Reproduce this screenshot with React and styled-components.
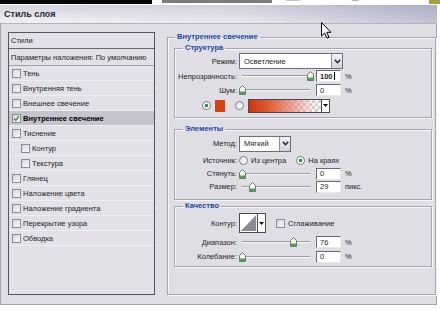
import React from 'react';
import styled, { createGlobalStyle } from 'styled-components';

const Global = createGlobalStyle`
  html, body { margin: 0; padding: 0; background: #fff; }
  body { font-family: "Liberation Sans", Arial, sans-serif; }
  #root { width: 440px; height: 310px; overflow: hidden; }
`;

const Screen = styled.div`
  position: relative;
  width: 440px;
  height: 310px;
  overflow: hidden;
  background: #fff;
  display: flex;
  flex-direction: column;
  font-family: "Liberation Sans", Arial, sans-serif;
  font-size: 7.5px;
  color: #1e1e24;
`;

const TopStrip = styled.div`
  display: flex;
  align-items: flex-start;
  height: 5px;
  flex: none;
`;

const StripSeg = styled.div`
  flex: none;
  width: ${(p) => p.$w}px;
  height: ${(p) => p.$h}px;
  margin-left: ${(p) => p.$ml || 0}px;
  background: ${(p) => p.$c};
`;

const Dialog = styled.div`
  width: 437px;
  height: 300px;
  flex: none;
  display: flex;
  flex-direction: column;
`;

const TitleBar = styled.div`
  height: 18px;
  flex: none;
  display: flex;
  align-items: center;
  padding-left: 4px;
  font-size: 9px;
  font-weight: bold;
  color: #2a2a30;
  background:
    linear-gradient(to bottom, rgba(170, 170, 195, 0.35), rgba(255, 255, 255, 0.25)),
    linear-gradient(to right, #ececf1 0%, #e2e2ea 55%, #aeb0c6 100%);
`;

const Body = styled.div`
  flex: 1;
  display: flex;
  align-items: flex-start;
  box-sizing: border-box;
  padding: 8px 0 0 7px;
  background: #dedee4;
  border: 1px solid #a4a4ae;
  border-top-color: #b4b4bc;
`;

const StyleList = styled.div`
  width: 147px;
  height: 263px;
  flex: none;
  box-sizing: border-box;
  border: 1px solid #55555e;
  background: #e1e1e7;
  display: flex;
  flex-direction: column;
`;

const ListHeader = styled.div`
  height: ${(p) => p.$h}px;
  flex: none;
  display: flex;
  align-items: center;
  padding-left: 2px;
  border-bottom: 1px solid ${(p) => p.$line};
`;

const ListRow = styled.div`
  height: 14px;
  flex: none;
  display: flex;
  align-items: center;
  gap: 2px;
  padding-left: ${(p) => (p.$indent ? 12 : 3)}px;
  border-bottom: 1px solid #eeeef2;
  background: ${(p) => (p.$selected ? '#c4c4cd' : 'transparent')};
  font-weight: ${(p) => (p.$selected ? 'bold' : 'normal')};
  color: ${(p) => (p.$selected ? '#000' : '#25252b')};
  white-space: nowrap;
`;

const CheckBox = styled.span`
  width: 7px;
  height: 7px;
  flex: none;
  display: inline-flex;
  align-items: center;
  justify-content: center;
  border: 1px solid #8a8a98;
  background: linear-gradient(135deg, #d4d4dc, #fafafc);
`;

const Group = styled.fieldset`
  margin: 0 0 0 12px;
  padding: 0 3px 0 6px;
  width: 269px;
  height: 263px;
  box-sizing: border-box;
  min-width: 0;
  border: 1px solid #a6a6b0;
  box-shadow: 1px 1px 0 #f6f6f8, inset 1px 1px 0 #f6f6f8;
  display: flex;
  flex-direction: column;
`;

const Legend = styled.legend`
  margin-left: ${(p) => p.$ml}px;
  padding: 0 2px;
  line-height: 10px;
  font-size: 7.5px;
  font-weight: bold;
  color: #1846a8;
`;

const SubGroup = styled.fieldset`
  margin: ${(p) => p.$mt}px 0 0 0;
  padding: 0 0 ${(p) => p.$pb}px 0;
  width: 258px;
  box-sizing: border-box;
  min-width: 0;
  border: 1px solid #a6a6b0;
  box-shadow: 1px 1px 0 #f6f6f8, inset 1px 1px 0 #f6f6f8;
`;

const Row = styled.div`
  height: ${(p) => p.$h}px;
  display: flex;
  align-items: center;
  padding-left: ${(p) => p.$pl || 0}px;
`;

const Label = styled.span`
  width: 62px;
  flex: none;
  text-align: right;
  margin-right: 2px;
  white-space: nowrap;
`;

const Select = styled.div`
  width: ${(p) => p.$w}px;
  height: 16px;
  box-sizing: border-box;
  flex: none;
  display: flex;
  align-items: center;
  background: #fff;
  border: 1px solid #6e6e78;
`;

const SelectText = styled.span`
  flex: 1;
  padding-left: 4px;
  white-space: nowrap;
`;

const DropButton = styled.span`
  width: 11px;
  height: 100%;
  flex: none;
  display: flex;
  align-items: center;
  justify-content: center;
  box-sizing: border-box;
  border-left: 1px solid #8e8e9c;
  background: linear-gradient(to bottom, #f2f2f6, #d2d2dc);
`;

const SliderBox = styled.div`
  position: relative;
  width: 74px;
  height: 10px;
  flex: none;
  margin-left: 0;
`;

const Track = styled.div`
  position: absolute;
  left: 3px;
  right: 3px;
  top: 4px;
  height: 0;
  border-top: 1px solid #9c9ca6;
  border-bottom: 1px solid #fafafc;
`;

const Thumb = styled.svg`
  position: absolute;
  top: 0;
  width: 7px;
  height: 10px;
`;

const NumInput = styled.div`
  width: 25px;
  height: 12px;
  flex: none;
  box-sizing: border-box;
  margin-left: 3px;
  padding-left: 3px;
  display: flex;
  align-items: center;
  background: #fff;
  border: 1px solid;
  border-color: #6a6a74 #e6e6ec #e6e6ec #6a6a74;
  font-weight: ${(p) => (p.$strong ? 'bold' : 'normal')};
`;

const Caret = styled.span`
  width: 1px;
  height: 8px;
  margin-left: 1px;
  background: #000;
`;

const Unit = styled.span`
  margin-left: 4px;
  white-space: nowrap;
`;

const Radio = styled.span`
  width: 7px;
  height: 7px;
  flex: none;
  border-radius: 50%;
  border: 1px solid #7a7a88;
  background: ${(p) =>
    p.$on
      ? 'radial-gradient(circle, #2f9a3a 0 1.6px, #fff 2.2px)'
      : 'linear-gradient(135deg, #e4e4ea, #fff)'};
  margin-right: ${(p) => p.$mr || 0}px;
  margin-left: ${(p) => p.$ml || 0}px;
`;

const Swatch = styled.span`
  width: 10px;
  height: 12px;
  flex: none;
  background: #d8420e;
`;

const GradientBox = styled.div`
  width: 82px;
  height: 14px;
  flex: none;
  box-sizing: border-box;
  display: flex;
  border: 1px solid #4a4a52;
  margin-left: 4px;
  background: conic-gradient(#d4d4d4 25%, #fff 0 50%, #d4d4d4 0 75%, #fff 0) 0 0 / 6px 6px;
`;

const GradientFill = styled.span`
  flex: 1;
  background: linear-gradient(
    to right,
    #d0340c 0%,
    #dc5a30 25%,
    rgba(232, 120, 96, 0.75) 55%,
    rgba(240, 170, 160, 0.25) 85%,
    rgba(255, 255, 255, 0) 100%
  );
`;

const DropStrip = styled.span`
  width: 7px;
  flex: none;
  display: flex;
  align-items: center;
  justify-content: center;
  background: #fff;
  border-left: 1px solid #4a4a52;
`;

const OptionText = styled.span`
  margin-left: 3px;
  white-space: nowrap;
`;

const ContourBox = styled.div`
  width: 27px;
  height: 20px;
  flex: none;
  box-sizing: border-box;
  display: flex;
  border: 1px solid #4a4a52;
  background: #fff;
`;

const ContourPreview = styled.svg`
  flex: 1;
  height: 100%;
`;

const Cursor = styled.svg`
  position: absolute;
  left: 321px;
  top: 22px;
  width: 11px;
  height: 17px;
`;

const CheckMark = () => (
  <svg width="7" height="7" viewBox="0 0 7 7">
    <path d="M1 3.6 L2.8 5.4 L6 1.2" fill="none" stroke="#2a9a2a" strokeWidth="1.4" />
  </svg>
);

const Chevron = () => (
  <svg width="7" height="5" viewBox="0 0 7 5">
    <path d="M0.8 0.8 L3.5 3.8 L6.2 0.8" fill="none" stroke="#1e1e28" strokeWidth="1.4" />
  </svg>
);

const SmallArrow = () => (
  <svg width="5" height="3" viewBox="0 0 5 3">
    <path d="M0 0 H5 L2.5 3 Z" fill="#111" />
  </svg>
);

const Slider = ({ frac }) => (
  <SliderBox>
    <Track />
    <Thumb viewBox="0 0 7 10" style={{ left: `${3 + frac * 68 - 3.5}px` }}>
      <path d="M0.5 3.5 L3.5 0.5 L6.5 3.5 V9.5 H0.5 Z" fill="#f4f6ee" stroke="#6c7a6c" />
      <rect x="1" y="6.5" width="5" height="2.5" fill="#49a84a" />
    </Thumb>
  </SliderBox>
);

const SliderRow = ({ label, frac, value, unit, h, caret }) => (
  <Row $h={h}>
    <Label>{label}</Label>
    <Slider frac={frac} />
    <NumInput $strong={caret}>
      {value}
      {caret && <Caret />}
    </NumInput>
    <Unit>{unit}</Unit>
  </Row>
);

const layers = [
  { name: 'Тень' },
  { name: 'Внутренняя тень' },
  { name: 'Внешнее свечение' },
  { name: 'Внутреннее свечение', checked: true, selected: true },
  { name: 'Тиснение' },
  { name: 'Контур', indent: true },
  { name: 'Текстура', indent: true },
  { name: 'Глянец' },
  { name: 'Наложение цвета' },
  { name: 'Наложение градиента' },
  { name: 'Перекрытие узора' },
  { name: 'Обводка' },
];

export default function App() {
  return (
    <Screen>
      <Global />
      <TopStrip>
        <StripSeg $w={152} $h={4} $c="#060606" />
        <StripSeg $w={110} $h={3} $ml={10} $c="#7c7c7c" />
        <StripSeg $w={14} $h={1} $ml={14} $c="#c8c8c8" />
        <StripSeg $w={6} $h={1} $ml={52} $c="#b0b0b0" />
        <StripSeg $w={22} $h={4} $ml={71} $c="#a3a040" />
      </TopStrip>
      <Dialog>
        <TitleBar>Стиль слоя</TitleBar>
        <Body>
          <StyleList>
            <ListHeader $h={15} $line="#66666e">Стили</ListHeader>
            <ListHeader $h={16} $line="#a0a0a8">Параметры наложения: По умолчанию</ListHeader>
            {layers.map((l) => (
              <ListRow key={l.name} $indent={l.indent} $selected={l.selected}>
                <CheckBox>{l.checked && <CheckMark />}</CheckBox>
                {l.name}
              </ListRow>
            ))}
          </StyleList>

          <Group>
            <Legend $ml={1}>Внутреннее свечение</Legend>

            <SubGroup $mt={1} $pb={3}>
              <Legend $ml={8}>Структура</Legend>
              <Row $h={16}>
                <Label>Режим:</Label>
                <Select $w={104}>
                  <SelectText>Осветление</SelectText>
                  <DropButton>
                    <Chevron />
                  </DropButton>
                </Select>
              </Row>
              <SliderRow h={14} label="Непрозрачность:" frac={1} value="100" unit="%" caret />
              <SliderRow h={14} label="Шум:" frac={0} value="0" unit="%" />
              <Row $h={17} $pl={27}>
                <Radio $on $mr={4} />
                <Swatch />
                <Radio $ml={10} />
                <GradientBox>
                  <GradientFill />
                  <DropStrip>
                    <SmallArrow />
                  </DropStrip>
                </GradientBox>
              </Row>
            </SubGroup>

            <SubGroup $mt={6} $pb={6}>
              <Legend $ml={8}>Элементы</Legend>
              <Row $h={19}>
                <Label>Метод:</Label>
                <Select $w={52}>
                  <SelectText>Мягкий</SelectText>
                  <DropButton>
                    <Chevron />
                  </DropButton>
                </Select>
              </Row>
              <Row $h={14}>
                <Label>Источник:</Label>
                <Radio />
                <OptionText>Из центра</OptionText>
                <Radio $on $ml={10} />
                <OptionText>На краях</OptionText>
              </Row>
              <SliderRow h={13} label="Стянуть:" frac={0} value="0" unit="%" />
              <SliderRow h={13} label="Размер:" frac={0.16} value="29" unit="пикс." />
            </SubGroup>

            <SubGroup $mt={1} $pb={2}>
              <Legend $ml={8}>Качество</Legend>
              <Row $h={24}>
                <Label>Контур:</Label>
                <ContourBox>
                  <ContourPreview viewBox="0 0 20 18" preserveAspectRatio="none">
                    <path d="M1 17 L19 1 V17 Z" fill="#8c8c94" />
                  </ContourPreview>
                  <DropStrip>
                    <SmallArrow />
                  </DropStrip>
                </ContourBox>
                <CheckBox style={{ marginLeft: 10 }} />
                <OptionText>Сглаживание</OptionText>
              </Row>
              <SliderRow h={14} label="Диапазон:" frac={0.76} value="76" unit="%" />
              <SliderRow h={15} label="Колебание:" frac={0} value="0" unit="%" />
            </SubGroup>
          </Group>
        </Body>
      </Dialog>
      <Cursor viewBox="0 0 11 17">
        <path d="M0.5 0.5 V14 L3.6 11 L6 16.2 L8 15.3 L5.7 10.3 H10 Z" fill="#fff" stroke="#000" strokeWidth="1" strokeLinejoin="round" />
      </Cursor>
    </Screen>
  );
}
